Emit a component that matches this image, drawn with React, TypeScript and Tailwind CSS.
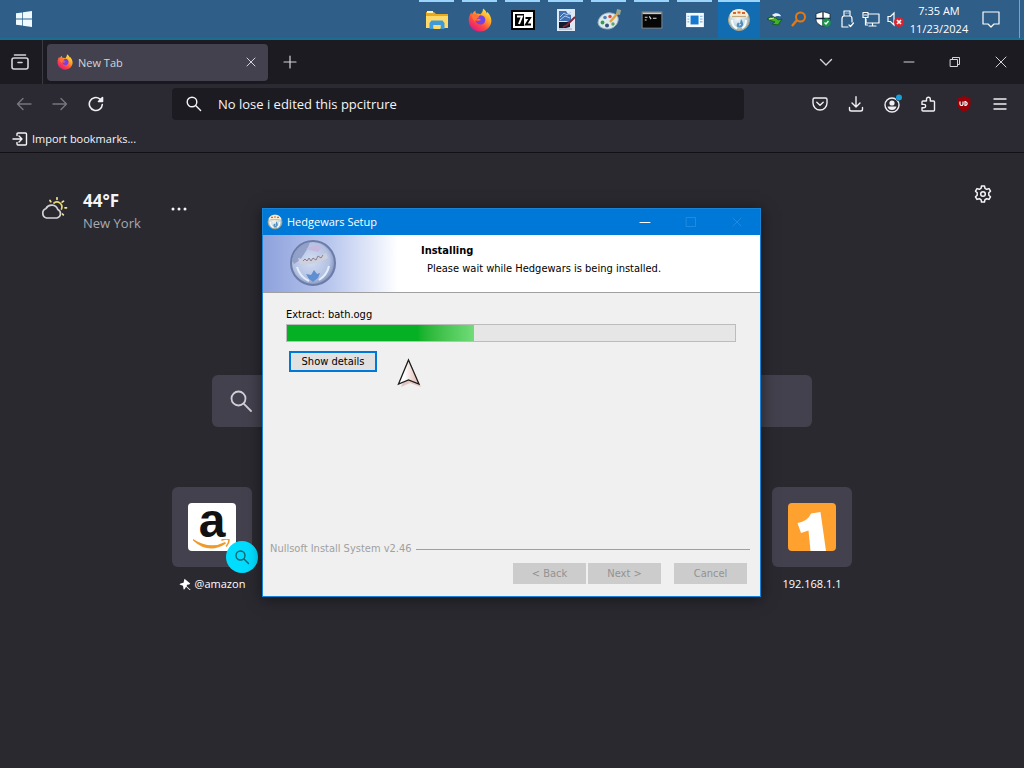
import type { ReactNode } from "react";

const uiFont = "font-['Open_Sans','Noto_Sans',sans-serif]";
const dialogFont = "font-['DejaVu_Sans_Condensed','DejaVu_Sans',sans-serif]";

function FirefoxIcon({ id, className }: { id: string; className: string }) {
  return (
    <svg viewBox="0 0 24 24" className={className} aria-hidden="true">
      <defs>
        <linearGradient id={id} x1="0.85" y1="0.05" x2="0.2" y2="0.95">
          <stop offset="0" stopColor="#fff04a" />
          <stop offset="0.35" stopColor="#ffa22b" />
          <stop offset="0.65" stopColor="#ff4a3d" />
          <stop offset="1" stopColor="#e31587" />
        </linearGradient>
      </defs>
      <path
        d="M15 .5c3 2 3.300 3.600 3.800 5 .3-.6.300-1.200.2-1.800 2.800 2.600 4.600 6 4.400 9.600C23 19.200 18.200 23.500 12.200 23.500 5.800 23.500.8 18.800.7 12.500.7 9 2 6.200 3.500 4.300c0 .8.100 1.500.5 2.100C5 4.500 6.200 3.200 7.500 2.500c-.2 1.300 0 2.300.8 3 1.500-.2 3 .2 4 .8 1.500-1.300 2.800-3.200 2.700-5.800z"
        fill={`url(#${id})`}
      />
      <path d="M12.500 7.300c3.500.2 5.200 2.700 4.800 5.300-.5 2.900-2.600 4.200-5.200 3.900-2.500-.3-4.200-2-4.200-4 1 1 1.800.9 2.700.4.800-.6 1.600-.5 2.300-1-.8-1.100-2.100-1.400-4-.9.600-2 1.700-3.400 3.600-3.700z" fill="#7542e5" />
      <path d="M3.800 7.500c1.600-1.300 3.700-1.500 5.500-.8l2.200 2.500c-1.800.1-2.800.9-3 2.200-1.300.2-1.500 1.200-1.400 2.300C5.400 12 4 10.200 3.800 7.500z" fill="#ff7139" />
    </svg>
  );
}

function HedgeIcon({ id, className }: { id: string; className: string }) {
  return (
    <svg viewBox="0 0 24 24" className={className} aria-hidden="true">
      <defs>
        <radialGradient id={id} cx="0.45" cy="0.4" r="0.65">
          <stop offset="0" stopColor="#f4f8fb" />
          <stop offset="0.6" stopColor="#c3d8df" />
          <stop offset="1" stopColor="#8fa5a4" />
        </radialGradient>
      </defs>
      <circle cx="12" cy="12" r="10.500" fill={`url(#${id})`} stroke="#b9a57c" strokeWidth="1" />
      <path d="M2.500 7Q5 1 12 1t9.500 6l-2 2.500H5z" fill="#f7ecd2" />
      <path d="M6 5h3M10.500 4.500h3M15 5h3" stroke="#d8652d" strokeWidth="1.800" />
      <path d="M5 8.500h14" stroke="#c2a77c" strokeWidth="1.200" />
      <path d="M5 12c0 4 2 7 5 8.500M19 12c0 4-2 7-4 8" stroke="#f6fbfc" strokeWidth="2" fill="none" />
      <path d="M14 11c3 4 3 8-1 8.500-4 0-4-3-2-5l2 1z" fill="#4e8fc0" />
      <path d="M12.500 15.500l1.500 1-1.500 1.500z" fill="#fff" />
    </svg>
  );
}

function FolderIcon() {
  return (
    <svg viewBox="0 0 24 20" className="h-5 w-6" aria-hidden="true">
      <path d="M1 2h8l2 2h12v14H1z" fill="#e9a820" />
      <path d="M2 1h6v2H2z" fill="#fff0a8" />
      <path d="M1 6h22v12H1z" fill="#ffda69" />
      <path d="M4.500 19v-6l2-2.500h11l2 2.500v6h-4v-4h-7v4z" fill="#3d9bdb" />
      <path d="M8.500 19v-4h7v4z" fill="#ffda69" />
    </svg>
  );
}

function SevenZipIcon() {
  return (
    <svg viewBox="0 0 24 20" className="h-5 w-6" aria-hidden="true">
      <rect x="1" y="1" width="22" height="18" fill="#fff" stroke="#000" strokeWidth="2" />
      <rect x="4" y="4" width="9" height="12" fill="#000" />
      <path d="M6 6.500h5L8 14" stroke="#fff" strokeWidth="2" fill="none" />
      <path d="M14.500 8h4.500l-4 6.500h5" stroke="#000" strokeWidth="2" fill="none" />
    </svg>
  );
}

function SetupPageIcon() {
  return (
    <svg viewBox="0 0 20 24" className="h-6 w-5" aria-hidden="true">
      <rect x="1" y="1" width="18" height="22" fill="#dfe9f5" />
      <path d="M3 3h7l2 3 3 1v6H3z" fill="#3f6fb4" />
      <path d="M4 9l4-4 3 2 4-3M4 12l5-4 5 2" stroke="#a9cdf0" fill="none" />
      <path d="M3 14h7l4-1v6l-4 1H3z" fill="#151b2e" />
      <path d="M19 9l-8 8-4 2" stroke="#7c2638" strokeWidth="1.800" fill="none" />
      <path d="M3 21h13" stroke="#8ba1be" />
    </svg>
  );
}

function PaintIcon() {
  return (
    <svg viewBox="0 0 26 24" className="h-6 w-[26px]" aria-hidden="true">
      <path d="M2 14C3 8 9 4 15 5s8 4 7 8-5 8-10 8-10-2-10-7z" fill="#dfe9ec" stroke="#91aebd" />
      <circle cx="6.500" cy="14.500" r="1.900" fill="#3a9c4b" />
      <circle cx="9" cy="9.500" r="1.800" fill="#4f7fb0" />
      <circle cx="14" cy="8.500" r="1.700" fill="#dd4936" />
      <circle cx="11" cy="17.500" r="2" fill="#35537d" />
      <circle cx="17" cy="16" r="1.700" fill="#58a66a" />
      <path d="M22 5l-8 9" stroke="#e5a13f" strokeWidth="2.400" />
      <path d="M21 1l4 1-1 5-4-1z" fill="#9aa98f" />
    </svg>
  );
}

function TerminalIcon() {
  return (
    <svg viewBox="0 0 24 20" className="h-[18px] w-[22px]" aria-hidden="true">
      <rect x="1" y="1" width="22" height="18" fill="#060606" stroke="#8d8d8d" />
      <path d="M1.500 1.500h21v2h-21z" fill="#c9c9c9" />
      <path d="M4 7h3M9 6l2 3M13 8h4M4 10h2" stroke="#e0e0e0" strokeWidth="1.200" />
    </svg>
  );
}

function PanelIcon() {
  return (
    <svg viewBox="0 0 22 18" className="h-4 w-[22px]" aria-hidden="true">
      <rect x="1" y="1" width="20" height="16" fill="#f6fbff" />
      <rect x="6" y="4" width="9" height="10" fill="#1678cf" />
      <path d="M2.500 5h2M2.500 8h2M2.500 11h2M16.500 5h3M16.500 8h3M16.500 11h3" stroke="#8fbbe0" strokeWidth="1.500" />
    </svg>
  );
}

function Line({
  children,
  box = "0 0 16 16",
  className = "size-4",
  width = 1.4,
}: {
  children: ReactNode;
  box?: string;
  className?: string;
  width?: number;
}) {
  return (
    <svg
      viewBox={box}
      className={className}
      fill="none"
      stroke="currentColor"
      strokeWidth={width}
      strokeLinecap="round"
      strokeLinejoin="round"
      aria-hidden="true"
    >
      {children}
    </svg>
  );
}

const apps: { name: string; icon: ReactNode }[] = [
  { name: "File Explorer", icon: <FolderIcon /> },
  { name: "Firefox", icon: <FirefoxIcon id="fx-task" className="size-6" /> },
  { name: "7-Zip", icon: <SevenZipIcon /> },
  { name: "Setup", icon: <SetupPageIcon /> },
  { name: "Paint", icon: <PaintIcon /> },
  { name: "Command Prompt", icon: <TerminalIcon /> },
  { name: "Panel", icon: <PanelIcon /> },
];

const trayIcons: { name: string; icon: ReactNode }[] = [
  {
    name: "Download manager",
    icon: (
      <svg viewBox="0 0 16 16" className="size-4">
        <circle cx="9.500" cy="7" r="6" fill="#2f5f93" />
        <path d="M5 4c3-3 8-2 9 1-2 1-4-1-6 1z" fill="#e8f1f4" />
        <path d="M0 8l5-3v2c3-1 5 0 6 2l4-1-4 6-6-1 3-2c-2-1-4-1-8-3z" fill="#3fb625" stroke="#164f16" strokeWidth=".8" />
        <path d="M2 8l5-1" stroke="#e2f7b0" />
      </svg>
    ),
  },
  {
    name: "Search tool",
    icon: (
      <svg viewBox="0 0 16 16" className="size-4" fill="none" stroke="#e87912">
        <circle cx="9.500" cy="6" r="4.500" strokeWidth="2" />
        <path d="M6 9l-5 6" strokeWidth="2.400" />
      </svg>
    ),
  },
  {
    name: "Security",
    icon: (
      <svg viewBox="0 0 16 16" className="size-4">
        <path d="M8 .5l7 2.200V8c0 4-3 6-7 7.500C4 14 1 12 1 8V2.700z" fill="#fff" stroke="#14263a" strokeWidth=".8" />
        <path d="M8 1v14M1 7.500h14" stroke="#14263a" strokeWidth="1.300" />
        <circle cx="11.500" cy="11.500" r="4.300" fill="#18964a" />
        <path d="M9.500 11.500l1.500 1.500 2.500-3" fill="none" stroke="#fff" strokeWidth="1.300" />
      </svg>
    ),
  },
  {
    name: "Safely remove hardware",
    icon: (
      <Line box="0 0 16 18" className="h-[18px] w-4" width={1.2}>
        <path d="M5 6V1h6v5M9 17H3V9q0-3 2-3h6q2 0 2 3v3M7 3h.2M9 3h.2M10 15l1.500 1.500 3-3.500" />
      </Line>
    ),
  },
  {
    name: "Network",
    icon: (
      <Line box="0 0 18 16" className="h-4 w-[18px]" width={1.2}>
        <path d="M6 3h11v9H4V8M1 1.500h5v5H1zM2.500 4h2M3.500 6.500V14h2M10.500 12v3M7 15h7" />
      </Line>
    ),
  },
  {
    name: "Volume muted",
    icon: (
      <svg viewBox="0 0 18 16" className="h-4 w-[18px]">
        <path d="M2 5.500h2.500L8 2v12l-3.500-3.500H2z" fill="none" stroke="#fff" strokeWidth="1.200" />
        <circle cx="13" cy="11" r="5" fill="#d9242e" />
        <path d="M11 9l4 4M15 9l-4 4" stroke="#fff" strokeWidth="1.600" />
      </svg>
    ),
  },
];

function Taskbar() {
  return (
    <header className="flex h-10 shrink-0 items-stretch border-b-2 border-[#1b6d92] bg-[#2f5e88] text-white">
      <button aria-label="Start" className="flex w-12 items-center justify-center">
        <svg viewBox="0 0 16 16" className="size-4" fill="#eefaff">
          <path d="M0 2.300l6.300-.9v6.200H0zM7 1.300L16 0v7.600H7zM0 8.400h6.300v6.200L0 13.700zM7 8.400h9V16l-9-1.300z" />
        </svg>
      </button>
      <nav aria-label="Running apps" className="ml-auto flex">
        {apps.map((app) => (
          <button key={app.name} aria-label={app.name} className="flex w-[43px] flex-col items-center">
            <span className="h-0.5 w-[35px] bg-[#9bd4fb]" />
            <span className="flex flex-1 items-center">{app.icon}</span>
          </button>
        ))}
        <button aria-label="Hedgewars Setup" className="ml-0.5 flex w-[42px] flex-col items-center bg-[#126cb1]">
          <span className="h-0.5 w-full bg-[#9bd4fb]" />
          <span className="flex flex-1 items-center">
            <HedgeIcon id="hw-task" className="size-6" />
          </span>
        </button>
      </nav>
      <div className="flex items-center pl-[3px]">
        {trayIcons.map((item) => (
          <button key={item.name} aria-label={item.name} className="flex h-full w-6 items-center justify-center">
            {item.icon}
          </button>
        ))}
        <time className="w-16 pt-0.5 text-center text-[11px] leading-[18px]">
          7:35 AM
          <br />
          11/23/2024
        </time>
        <button aria-label="Notifications" className="flex h-full w-10 items-center justify-center">
          <Line box="0 0 18 18" className="size-[18px]" width={1.2}>
            <path d="M1 2h16v12h-5l-3 3-3-3H1z" />
          </Line>
        </button>
        <button aria-label="Show desktop" className="ml-2 h-full w-[5px] border-l border-[#7ba3c1]" />
      </div>
    </header>
  );
}

function TabStrip() {
  return (
    <div className="flex h-11 shrink-0 items-center bg-[#1c1b22] text-[#d4d4da]">
      <button aria-label="Firefox View" className="flex h-full w-[43px] items-center justify-center border-r border-[#3b3a44] pr-0.5">
        <Line box="0 0 18 16" className="h-4 w-[18px]" width={1.6}>
          <path d="M3.500 1h11M3 4h12q2 0 2 2v7q0 2-2 2H3q-2 0-2-2V6q0-2 2-2zM7 8.500h4" />
        </Line>
      </button>
      <div className="ml-1 flex h-[37px] w-[221px] items-center rounded bg-[#42414d] pl-2.5 pr-2 shadow">
        <FirefoxIcon id="fx-tab" className="size-4" />
        <span className="ml-[5px] flex-1 pt-0.5 text-[11px]">New Tab</span>
        <button aria-label="Close tab" className="flex size-[18px] items-center justify-center">
          <Line box="0 0 10 10" className="size-2.5" width={1}>
            <path d="M1 1l8 8M9 1L1 9" />
          </Line>
        </button>
      </div>
      <button aria-label="New tab" className="flex size-11 items-center justify-center">
        <Line box="0 0 14 14" className="size-3.5" width={1.2}>
          <path d="M7 1v12M1 7h12" />
        </Line>
      </button>
      <button aria-label="List all tabs" className="ml-auto mr-[37px] flex h-full w-[46px] items-center justify-center">
        <Line box="0 0 14 14" className="size-3.5">
          <path d="M1.500 4.500L7 10l5.500-5.500" />
        </Line>
      </button>
      <button aria-label="Minimize" className="flex h-full w-[46px] items-center justify-center">
        <Line box="0 0 12 12" className="size-3" width={1}>
          <path d="M1 6h10" />
        </Line>
      </button>
      <button aria-label="Restore" className="flex h-full w-[46px] items-center justify-center">
        <Line box="0 0 12 12" className="size-3" width={1}>
          <path d="M1.500 3.500h7v7h-7zM3.500 3.500v-2h7v7h-2" />
        </Line>
      </button>
      <button aria-label="Close" className="flex h-full w-[46px] items-center justify-center">
        <Line box="0 0 12 12" className="size-3" width={1}>
          <path d="M1 1l10 10M11 1L1 11" />
        </Line>
      </button>
    </div>
  );
}

function ToolButton({ label, children, dim = false }: { label: string; children: ReactNode; dim?: boolean }) {
  return (
    <button
      aria-label={label}
      className={`flex h-10 w-9 items-center justify-center ${dim ? "text-[#77767e]" : "text-[#f0f0f4]"}`}
    >
      {children}
    </button>
  );
}

function NavBar() {
  return (
    <div className="flex h-10 shrink-0 items-center px-1.5">
      <ToolButton label="Back" dim>
        <Line>
          <path d="M15 8H1.500M7 2.500L1.500 8 7 13.500" />
        </Line>
      </ToolButton>
      <ToolButton label="Forward" dim>
        <Line>
          <path d="M1 8h13.500M9 2.500L14.500 8 9 13.500" />
        </Line>
      </ToolButton>
      <ToolButton label="Reload">
        <Line width={1.6}>
          <path d="M14.300 8.500A6.500 6.500 0 1 1 11.800 2.900L14 5" />
          <path d="M14.500 1.500v4h-4z" fill="currentColor" />
        </Line>
      </ToolButton>
      <div className="mx-[58px] flex h-8 flex-1 items-center rounded-sm bg-[#1c1b22] pl-3.5 text-[#f5f5f8]">
        <Line className="size-4">
          <circle cx="6" cy="6" r="4.800" />
          <path d="M9.600 9.600l5 5" />
        </Line>
        <input
          aria-label="Search or enter address"
          defaultValue="No lose i edited this ppcitrure"
          className="ml-4 flex-1 bg-transparent pt-0.5 text-[13px] outline-none"
        />
      </div>
      <ToolButton label="Save to Pocket">
        <Line>
          <path d="M2.500 2h11Q15 2 15 3.500V7a7 7 0 0 1-14 0V3.500Q1 2 2.500 2zM4.800 6.200L8 9.200l3.200-3" />
        </Line>
      </ToolButton>
      <ToolButton label="Downloads">
        <Line>
          <path d="M8 .8v10M4 7l4 4 4-4M1.500 11.500v1.700q0 1.800 1.800 1.800h9.400q1.800 0 1.800-1.800v-1.700" />
        </Line>
      </ToolButton>
      <ToolButton label="Account">
        <svg viewBox="0 0 20 20" className="size-5">
          <circle cx="10" cy="11" r="7" fill="none" stroke="currentColor" strokeWidth="1.400" />
          <circle cx="10" cy="9" r="2.600" fill="currentColor" />
          <path d="M5.500 12.500h9Q13.500 16 10 16t-4.500-3.500z" fill="currentColor" />
          <circle cx="17" cy="3.500" r="3.400" fill="#2b2a33" />
          <circle cx="17" cy="3.500" r="3" fill="#169fdb" />
        </svg>
      </ToolButton>
      <ToolButton label="Extensions">
        <Line>
          <path d="M6.500 3.200a1.900 1.900 0 0 1 3.800 0V5h3.200q1 0 1 1v8q0 1-1 1H3q-1 0-1-1v-2.200h2a1.700 1.700 0 0 0 0-3.400H2V6q0-1 1-1h3.500z" />
        </Line>
      </ToolButton>
      <ToolButton label="uBlock Origin">
        <svg viewBox="0 0 16 16" className="size-4">
          <path d="M8 0l6.500 2.500V8c0 4-2.500 6-6.500 8-4-2-6.500-4-6.500-8V2.500z" fill="#970006" />
          <path d="M4 5.500V8a1.500 1.500 0 0 0 3 0V5.500M9 5.700h.8a2 2 0 0 1 0 3.800H9z" stroke="#fff" strokeWidth="1.200" fill="none" />
        </svg>
      </ToolButton>
      <ToolButton label="Menu">
        <Line>
          <path d="M2 3h12M2 8h12M2 13h12" />
        </Line>
      </ToolButton>
    </div>
  );
}

function Tile({ label, pinned = false, badge = false, children }: { label: string; pinned?: boolean; badge?: boolean; children: ReactNode }) {
  return (
    <a href="#" className="flex w-[120px] flex-col items-center text-white">
      <span className="relative flex size-20 items-center justify-center rounded-md bg-[#42414d]">
        {children}
        {badge && (
          <span className="absolute -bottom-1.5 -right-1.5 flex size-8 items-center justify-center rounded-full bg-[#00ddff] text-[#17616e]">
            <Line className="size-4">
              <circle cx="6.500" cy="6.500" r="4.500" />
              <path d="M10 10l4.500 4.500" />
            </Line>
          </span>
        )}
      </span>
      <span className="mt-2 flex items-center gap-1 text-[11px] leading-[18px]">
        {pinned && (
          <svg viewBox="0 0 12 12" className="size-3" fill="currentColor" aria-hidden="true">
            <path d="M5.500.8l5.700 4.700-1 1-2.200.2-.3 1.500 4 3.700-.6.600-4-3.700-1.500 2.400-1 .3-.6-3.800L.5 6.500l1-1 3-.7z" />
          </svg>
        )}
        {label}
      </span>
    </a>
  );
}

function NewTabPage() {
  return (
    <main className="flex-1 bg-[#2a2930]">
      <div className="flex h-[222px] items-start justify-between pl-10 pr-8 pt-8">
        <section aria-label="Weather" className="flex items-center text-[#f5f5f8]">
          <svg viewBox="0 0 28 24" className="h-6 w-7" fill="none" strokeWidth="1.700" strokeLinecap="round" aria-hidden="true">
            <path d="M6.500 21a5 5 0 0 1-.5-9.500 6.500 6.500 0 0 1 11.800 1A4.500 4.500 0 0 1 17 21z" stroke="#d3d3d6" />
            <path d="M14 6a5 5 0 0 1 7.500 6" stroke="#e8d96c" />
            <path d="M17 .8v1.500M10 3.500l.8 1.200M23.500 4.200l-1.300 1M25 10.800h1.500M22.500 17l.8.8" stroke="#f1e490" />
          </svg>
          <div className="ml-[15px] mt-1">
            <p className="text-[17px] font-bold leading-6">44°F</p>
            <p className="text-[13px] leading-5 text-[#a9a8ae]">New York</p>
          </div>
          <button aria-label="Weather options" className="ml-[30px] flex h-8 items-center">
            <svg viewBox="0 0 16 4" className="h-1 w-4" fill="currentColor">
              <circle cx="2" cy="2" r="1.500" />
              <circle cx="8" cy="2" r="1.500" />
              <circle cx="14" cy="2" r="1.500" />
            </svg>
          </button>
        </section>
        <button aria-label="Personalize new tab" className="flex size-[18px] items-center text-[#f5f5f8]">
          <Line box="0 0 18 18" className="size-[18px]" width={1.5}>
            <path d="M7.500 1h3l.5 2.300 1.700 1 2.300-.7 1.500 2.600-1.700 1.600v2.400l1.700 1.600-1.500 2.600-2.300-.7-1.700 1-.5 2.300h-3L7 14.700l-1.700-1-2.300.7-1.500-2.600 1.700-1.600V7.800L1.500 6.200 3 3.600l2.300.7 1.700-1z" />
            <circle cx="9" cy="9" r="2.300" />
          </Line>
        </button>
      </div>
      <div className="mx-auto flex h-[52px] max-w-[600px] items-center rounded-md bg-[#42414d] pl-[18px] text-[#cfcfd6]">
        <Line box="0 0 22 22" className="size-[22px]" width={1.8}>
          <circle cx="8.500" cy="8.500" r="7" />
          <path d="M13.700 13.700L21 21" />
        </Line>
        <input aria-label="Search the web" className="ml-3 h-full flex-1 bg-transparent outline-none" />
      </div>
      <div className="mx-auto mt-[60px] flex max-w-[720px] justify-between">
        <Tile label="@amazon" pinned badge>
          <span className="flex size-12 flex-col items-center rounded bg-white text-[#111111]">
            <span className="h-9 font-['Liberation_Sans',sans-serif] text-[48px] font-bold leading-9">a</span>
            <svg viewBox="0 0 40 12" className="h-3 w-10" aria-hidden="true">
              <path d="M1 0q17 11 32 3l1 1.500Q17 16 1 1.500z" fill="#f09a2a" />
              <path d="M30 1q6-2 7 0 0 3-2.500 6" fill="none" stroke="#f09a2a" strokeWidth="1.600" strokeLinecap="round" />
            </svg>
          </span>
        </Tile>
        <Tile label="192.168.1.1">
          <svg viewBox="0 0 48 48" className="size-12" aria-hidden="true">
            <rect width="48" height="48" rx="4" fill="#ffa12f" />
            <path d="M9.500 20Q20 18 23 10.500l9.500-1.500L38 48H22.500l-2-20.500-7.500 2.500z" fill="#fff" />
          </svg>
        </Tile>
      </div>
    </main>
  );
}

function HeaderDisc() {
  return (
    <svg viewBox="0 0 48 48" className="ml-[26px] mt-1 size-12" aria-hidden="true">
      <defs>
        <radialGradient id="disc" cx="0.45" cy="0.45" r="0.6">
          <stop offset="0" stopColor="#d3ddf3" />
          <stop offset="0.7" stopColor="#b3c1e2" />
          <stop offset="1" stopColor="#7487b8" />
        </radialGradient>
      </defs>
      <circle cx="24" cy="24" r="22" fill="url(#disc)" stroke="#6d7ca6" strokeWidth="2" />
      <path d="M3 22C4 12 12 4 21 3c-2 7-6 12-10 18l-6 4z" fill="#8797c2" opacity=".8" />
      <path d="M17 10q9-6 16-2l-4 5z" fill="#c5b9df" />
      <path d="M9 19q12 4 28-5l2 5q-14 8-28 6z" fill="#cfd0de" />
      <path d="M14 22l2-2 2 2 2-3 2 3 2-3 3 2 2-4 3 2 2-3" stroke="#8c7f8d" fill="none" />
      <path d="M8 28q3 10 12 14M40 27q-2 9-10 14" stroke="#e6edfa" strokeWidth="2" fill="none" />
      <path d="M17 35l5 1 3-5 3 4 3-1-2 5-5 4-4-3z" fill="#5f8fd0" />
    </svg>
  );
}

function WizardButton({ children }: { children: ReactNode }) {
  return (
    <button disabled className="h-[21px] w-[73px] bg-[#cccccc] text-[11px] leading-[21px] text-[#929292]">
      {children}
    </button>
  );
}

function SetupDialog() {
  const progress = 41.7;
  return (
    <section
      role="dialog"
      aria-label="Hedgewars Setup"
      className={`absolute left-[262px] top-[208px] w-[499px] border border-[#1684d8] bg-[#f0f0f0] text-[11px] text-black shadow-[0_2px_14px_rgba(0,0,0,0.5)] ${dialogFont}`}
    >
      <div className={`flex h-[26px] items-center bg-[#0078d7] pl-1 text-[11px] text-white ${uiFont}`}>
        <HedgeIcon id="hw-title" className="size-4" />
        <h1 className="ml-1">Hedgewars Setup</h1>
        <button aria-label="Minimize" className="ml-auto flex h-full w-[46px] items-center justify-center">
          <Line box="0 0 12 12" className="size-3" width={1}>
            <path d="M1 6.500h10" />
          </Line>
        </button>
        <button aria-label="Maximize" disabled className="flex h-full w-[46px] items-center justify-center text-[#1f8ae0]">
          <Line box="0 0 12 12" className="size-3" width={1}>
            <path d="M1.500 1.500h9v9h-9z" />
          </Line>
        </button>
        <button aria-label="Close" disabled className="flex h-full w-[46px] items-center justify-center text-[#1f8ae0]">
          <Line box="0 0 12 12" className="size-3" width={1}>
            <path d="M2 2l8 8M10 2l-8 8" />
          </Line>
        </button>
      </div>
      <div className="flex h-[58px] border-b border-[#a0a0a0] bg-white">
        <div className="w-[150px] bg-linear-to-r from-[#8ea2dc] via-[#b9c7ee] via-45% to-white to-90%">
          <HeaderDisc />
        </div>
        <div className="pl-2 pt-2">
          <h2 className="font-bold leading-4">Installing</h2>
          <p className="ml-1.5 mt-0.5 leading-4">Please wait while Hedgewars is being installed.</p>
        </div>
      </div>
      <div className="h-[248px] pl-[23px] pr-6 pt-3.5">
        <p className="leading-4">Extract: bath.ogg</p>
        <div
          role="progressbar"
          aria-label="Installation progress"
          aria-valuenow={progress}
          className="mt-px h-[18px] border border-[#bcbcbc] bg-[#e6e6e6]"
        >
          <div className="h-full bg-linear-to-r from-[#06b025] from-70% to-[#6fdc78]" style={{ width: `${progress}%` }} />
        </div>
        <button className="ml-[3px] mt-[9px] block h-[21px] w-[88px] border-2 border-[#0078d7] bg-[#e1e1e1] leading-[17px]">
          Show details
        </button>
      </div>
      <div className="flex items-center gap-1 pl-[7px] pr-2.5 leading-4 text-[#a0a0a0]">
        <span>Nullsoft Install System v2.46</span>
        <span className="h-px flex-1 bg-[#a0a0a0]" />
      </div>
      <div className="flex justify-end pb-3 pr-[13px] pt-1.5">
        <WizardButton>&lt; Back</WizardButton>
        <span className="w-0.5" />
        <WizardButton>Next &gt;</WizardButton>
        <span className="w-[13px]" />
        <WizardButton>Cancel</WizardButton>
      </div>
    </section>
  );
}

export default function App() {
  return (
    <div className={`relative flex min-h-screen flex-col overflow-hidden bg-[#2b2a33] ${uiFont}`}>
      <Taskbar />
      <TabStrip />
      <NavBar />
      <div className="flex h-[29px] shrink-0 items-center border-b border-[#111015] pl-3 text-[11px] text-[#f5f5f8]">
        <button className="flex items-center gap-1 pt-0.5">
          <Line>
            <path d="M1 8h9M7 5l3 3-3 3M5 4.500V3q0-1 1-1h7.500q1 0 1 1v10q0 1-1 1H6q-1 0-1-1v-1.500" />
          </Line>
          Import bookmarks...
        </button>
      </div>
      <NewTabPage />
      <SetupDialog />
      <svg viewBox="0 0 26 30" className="pointer-events-none absolute left-[396px] top-[358px] h-[30px] w-[26px]" aria-hidden="true">
        <defs>
          <linearGradient id="pointer" x1="0" y1="0" x2="1" y2="0">
            <stop offset="0.3" stopColor="#ffffff" />
            <stop offset="1" stopColor="#e0b4ab" />
          </linearGradient>
        </defs>
        <path d="M14 5l11 24-11-4-9 4z" fill="#d9a9a0" opacity=".6" />
        <path d="M12.500 2L23 26l-10.500-4L2.500 26z" fill="url(#pointer)" stroke="#1c1c1c" strokeWidth="1.300" />
      </svg>
    </div>
  );
}
